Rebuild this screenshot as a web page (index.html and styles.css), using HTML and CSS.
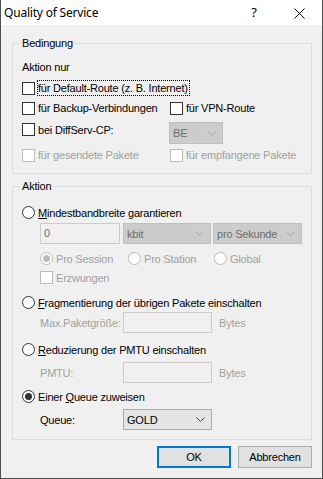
FILE: index.html
```html
<!DOCTYPE html>
<html>
  <head>
    <title>Quality of Service</title>
    <link rel="stylesheet" href="styles.css">
  </head>
  <body>
    <div class="window">
      <div class="titlebar">
        <span class="title">Quality of Service</span>
        <span class="help">?</span>
        <svg class="close" width="11" height="11" viewBox="0 0 11 11">
          <path d="M0.5 0.5 L10.5 10.5 M10.5 0.5 L0.5 10.5" stroke="#000" stroke-width="1" fill="none"/>
        </svg>
      </div>

      <div class="content">
        <fieldset class="group group-cond">
          <legend>Bedingung</legend>
          <div class="caption">Aktion nur</div>

          <div class="row row-1">
            <label class="check"><span class="box"></span><span class="focus">für Default-Route (z. B. Internet)</span></label>
          </div>

          <div class="row row-2">
            <label class="check col-1"><span class="box"></span>für Backup-Verbindungen</label>
            <label class="check"><span class="box"></span>für VPN-Route</label>
          </div>

          <div class="row row-3">
            <label class="check col-1"><span class="box"></span>bei DiffServ-CP:</label>
            <div class="combo disabled combo-be">
              <span class="combo-text">BE</span>
              <svg class="chevron" width="9" height="5" viewBox="0 0 9 5"><polyline points="0.5,0.5 4.5,4.5 8.5,0.5" fill="none" stroke="#a6a6a6"/></svg>
            </div>
          </div>

          <div class="row row-4">
            <label class="check disabled col-1"><span class="box"></span>für gesendete Pakete</label>
            <label class="check disabled"><span class="box"></span>für empfangene Pakete</label>
          </div>
        </fieldset>

        <fieldset class="group group-action">
          <legend>Aktion</legend>

          <div class="row r-band">
            <label class="radio"><span class="dot"></span><span><u>M</u>indestbandbreite garantieren</span></label>
          </div>

          <div class="row r-fields indent">
            <div class="edit disabled edit-zero">0</div>
            <div class="combo disabled combo-kbit">
              <span class="combo-text">kbit</span>
              <svg class="chevron" width="9" height="5" viewBox="0 0 9 5"><polyline points="0.5,0.5 4.5,4.5 8.5,0.5" fill="none" stroke="#a6a6a6"/></svg>
            </div>
            <div class="combo disabled combo-unit">
              <span class="combo-text">pro Sekunde</span>
              <svg class="chevron" width="9" height="5" viewBox="0 0 9 5"><polyline points="0.5,0.5 4.5,4.5 8.5,0.5" fill="none" stroke="#a6a6a6"/></svg>
            </div>
          </div>

          <div class="row r-scope indent">
            <label class="radio disabled checked scope-1"><span class="dot"></span>Pro Session</label>
            <label class="radio disabled scope-2"><span class="dot"></span>Pro Station</label>
            <label class="radio disabled"><span class="dot"></span>Global</label>
          </div>

          <div class="row r-force indent">
            <label class="check disabled"><span class="box"></span>Erzwungen</label>
          </div>

          <div class="row r-frag">
            <label class="radio"><span class="dot"></span><span><u>F</u>ragmentierung der übrigen Pakete einschalten</span></label>
          </div>

          <div class="row r-size indent">
            <span class="field-label disabled-text">Max.Paketgröße:</span>
            <div class="edit disabled edit-wide"></div>
            <span class="unit disabled-text">Bytes</span>
          </div>

          <div class="row r-pmtu">
            <label class="radio"><span class="dot"></span><span><u>R</u>eduzierung der PMTU einschalten</span></label>
          </div>

          <div class="row r-pmtu-size indent">
            <span class="field-label disabled-text">PMTU:</span>
            <div class="edit disabled edit-wide"></div>
            <span class="unit disabled-text">Bytes</span>
          </div>

          <div class="row r-queue">
            <label class="radio checked"><span class="dot"></span><span>Einer <u>Q</u>ueue zuweisen</span></label>
          </div>

          <div class="row r-queue-sel indent">
            <span class="field-label">Queue:</span>
            <div class="combo combo-gold">
              <span class="combo-text">GOLD</span>
              <svg class="chevron" width="9" height="5" viewBox="0 0 9 5"><polyline points="0.5,0.5 4.5,4.5 8.5,0.5" fill="none" stroke="#444"/></svg>
            </div>
          </div>
        </fieldset>

        <div class="buttons">
          <button class="btn btn-default">OK</button>
          <button class="btn">Abbrechen</button>
        </div>
      </div>
    </div>
  </body>
</html>
```

FILE: styles.css
```css
body {
  margin: 0;
  background-color: #f0f0f0;
  font-family: "Liberation Sans", Arial, sans-serif;
  font-size: 11px;
  letter-spacing: -0.2px;
  color: #000;
}
.window {
  width: 323px;
  height: 479px;
  box-sizing: border-box;
  border: 1px solid #4d4d4d;
  border-top: none;
  background-color: #f0f0f0;
  display: flex;
  flex-direction: column;
}
.titlebar {
  height: 25px;
  flex-shrink: 0;
  background-color: #fff;
  display: flex;
  align-items: center;
  letter-spacing: 0;
}
.title {
  font-family: "Noto Sans", "Open Sans", sans-serif;
  font-size: 12px;
  letter-spacing: -0.2px;
  margin-left: 3px;
  margin-top: -1px;
}
.help {
  margin-left: auto;
  font-family: "Noto Sans", sans-serif;
  font-size: 13px;
  margin-right: 37px;
  margin-top: -1px;
}
.close {
  margin-right: 17px;
  margin-top: 2px;
}

.content {
  padding: 11px 10px 0 11px;
}
.group {
  margin: 0;
  padding: 0 0 10px 9px;
  border: 1px solid #dcdcdc;
}
.group legend {
  margin-left: -2px;
  padding: 0 2px;
  line-height: 14px;
}
.group-action {
  margin-top: 5px;
  padding-bottom: 9px;
}

.row {
  display: flex;
  align-items: center;
}
.indent {
  padding-left: 18px;
}
.col-1 {
  width: 148px;
}

.caption {
  line-height: 14px;
  margin-top: 10px;
}
.row-1 { margin-top: 6px; height: 16px; }
.row-2 { margin-top: 4px; height: 16px; }
.row-3 { margin-top: 6px; height: 22px; align-items: flex-start; }
.row-4 { margin-top: 3px; height: 16px; }

.r-band { margin-top: 12px; height: 15px; }
.r-fields { margin-top: 3px; height: 21px; }
.r-scope { margin-top: 7px; height: 15px; }
.r-force { margin-top: 4px; height: 15px; }
.r-frag { margin-top: 10px; height: 15px; }
.r-size { margin-top: 2px; height: 21px; }
.r-pmtu { margin-top: 9px; height: 15px; }
.r-pmtu-size { margin-top: 5px; height: 21px; }
.r-queue { margin-top: 6px; height: 15px; }
.r-queue-sel { margin-top: 5px; height: 21px; }

/* checkboxes */
.check {
  display: flex;
  align-items: center;
  height: 15px;
}
.check .box {
  width: 13px;
  height: 13px;
  box-sizing: border-box;
  border: 1px solid #333;
  background-color: #fff;
  margin-right: 3px;
}
.check .focus {
  border: 1px dotted #000;
  line-height: 14px;
  margin-left: -1px;
  padding-right: 1px;
}
.check.disabled {
  color: #a0a0a0;
}
.check.disabled .box {
  border-color: #bcbcbc;
}

/* radios */
.radio {
  display: flex;
  align-items: center;
  height: 15px;
}
.radio .dot {
  width: 13px;
  height: 13px;
  box-sizing: border-box;
  border: 1px solid #333;
  border-radius: 50%;
  background-color: #fff;
  margin-right: 3px;
  display: flex;
  align-items: center;
  justify-content: center;
}
.radio.checked .dot::after {
  content: "";
  width: 7px;
  height: 7px;
  border-radius: 50%;
  background-color: #333;
}
.radio.disabled {
  color: #a0a0a0;
}
.radio.disabled .dot {
  border-color: #bcbcbc;
}
.radio.disabled.checked .dot::after {
  background-color: #bcbcbc;
}
.scope-1 { width: 88px; }
.scope-2 { width: 86px; }

/* combo boxes and edits */
.combo {
  display: flex;
  align-items: center;
  height: 21px;
  box-sizing: border-box;
  border: 1px solid #adadad;
  background-color: #e5e5e5;
  padding: 0 6px 0 3px;
}
.combo-text {
  flex: 1;
}
.combo.disabled {
  background-color: #cccccc;
  border-color: #bfbfbf;
  color: #6d6d6d;
}
.combo-be {
  width: 54px;
  height: 22px;
  margin-left: -1px;
}
.combo-kbit {
  width: 88px;
  margin-left: 3px;
}
.combo-unit {
  width: 89px;
  margin-left: 2px;
}
.combo-gold {
  width: 89px;
}
.edit {
  height: 21px;
  box-sizing: border-box;
  border: 1px solid #cccccc;
  background-color: #f0f0f0;
  color: #6d6d6d;
  padding-left: 3px;
  line-height: 19px;
}
.edit-zero {
  width: 80px;
}
.edit-wide {
  width: 89px;
}
.field-label {
  width: 83px;
}
.disabled-text {
  color: #a0a0a0;
}
.unit {
  margin-left: 7px;
}

/* buttons */
.buttons {
  display: flex;
  justify-content: flex-end;
  gap: 7px;
  margin-top: 6px;
}
.btn {
  width: 74px;
  height: 22px;
  box-sizing: border-box;
  border: 1px solid #adadad;
  background-color: #e1e1e1;
  font-family: "Liberation Sans", Arial, sans-serif;
  font-size: 11px;
  letter-spacing: -0.2px;
  color: #000;
  padding: 0;
}
.btn-default {
  border: 2px solid #0078d7;
}
```
